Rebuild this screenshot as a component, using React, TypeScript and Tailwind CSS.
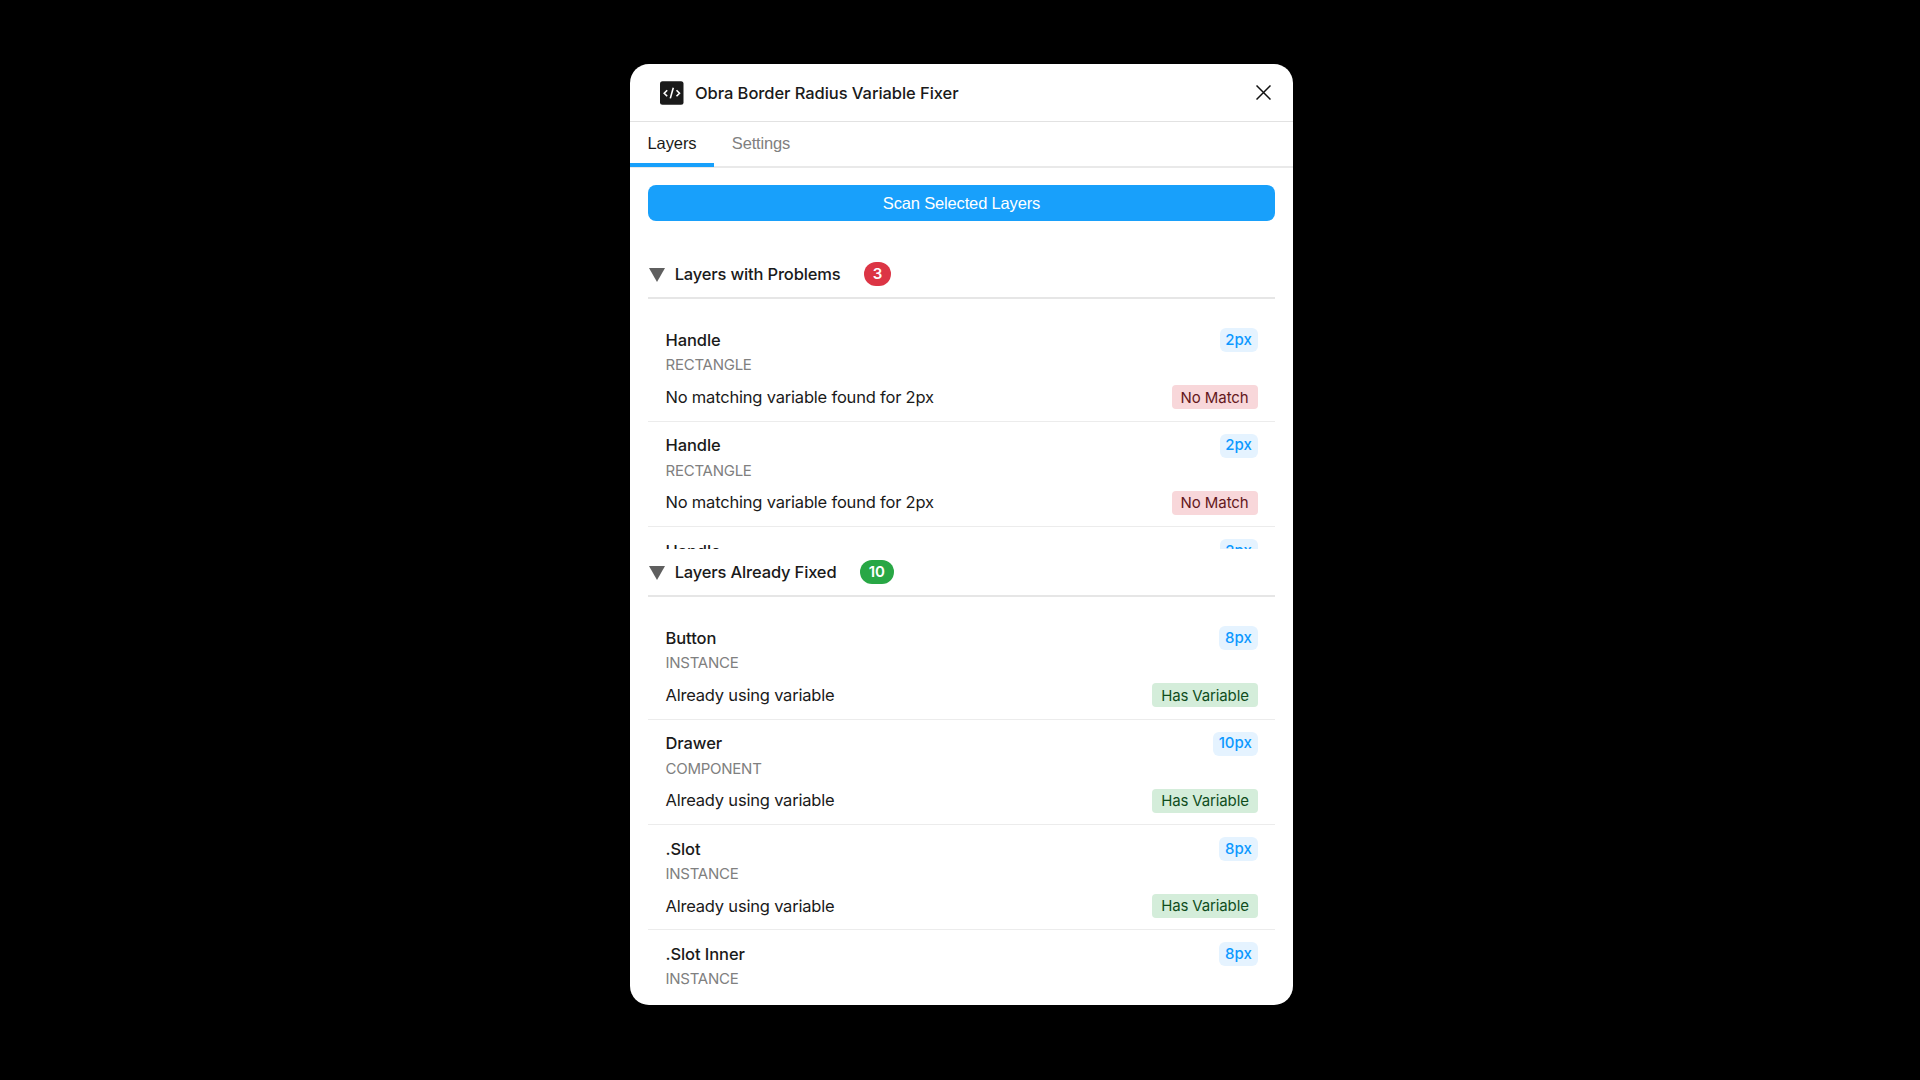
import React from "react";

type Layer = { name: string; type: string; radius: string };

const problems: Layer[] = [
  { name: "Handle", type: "RECTANGLE", radius: "2px" },
  { name: "Handle", type: "RECTANGLE", radius: "2px" },
  { name: "Handle", type: "RECTANGLE", radius: "2px" },
];

const fixed: Layer[] = [
  { name: "Button", type: "INSTANCE", radius: "8px" },
  { name: "Drawer", type: "COMPONENT", radius: "10px" },
  { name: ".Slot", type: "INSTANCE", radius: "8px" },
  { name: ".Slot Inner", type: "INSTANCE", radius: "8px" },
];

function LayerRow({ layer, ok }: { layer: Layer; ok: boolean }) {
  return (
    <div className="flex h-[105.33px] shrink-0 flex-col border-b border-[#ececec] pt-3 pr-[17.5px] pl-[17.5px]">
      <div className="flex h-6 items-center justify-between">
        <span className="font-medium tracking-[-0.08px]">{layer.name}</span>
        <span className="flex h-6 items-center rounded-md bg-[#e5f3ff] px-[5.8px] text-[15px] font-medium tracking-[-0.05px] text-[#0d99ff]">
          {layer.radius}
        </span>
      </div>
      <div className="h-[25px] text-[15px] leading-[25px] tracking-[-0.25px] text-[#808080]">{layer.type}</div>
      <div className="mt-2 flex h-6 items-center justify-between">
        <span className="tracking-[-0.2px]">
          {ok ? "Already using variable" : `No matching variable found for ${layer.radius}`}
        </span>
        {ok ? (
          <span className="flex h-6 items-center rounded bg-[#d4edda] px-[8.7px] pt-px text-[15px] tracking-[-0.13px] text-[#0f4d1d]">
            Has Variable
          </span>
        ) : (
          <span className="flex h-6 items-center rounded bg-[#f8d7da] px-[8.8px] pt-px text-[15px] tracking-[-0.05px] text-[#641820]">
            No Match
          </span>
        )}
      </div>
    </div>
  );
}

function SectionHeader({ title, count, ok }: { title: string; count: number; ok: boolean }) {
  return (
    <div className="flex h-12 shrink-0 items-start border-b-2 border-[#e6e6e6]">
      <svg className="mt-[16.5px] ml-[1.2px] h-[14px] w-4" viewBox="0 0 16 14" fill="#5f5f5f">
        <path d="M0 0H16L8 14Z" />
      </svg>
      <span className="mt-[11px] ml-[9.5px] h-6 leading-6 font-medium tracking-[-0.16px]">{title}</span>
      <span
        className={
          "mt-[11px] ml-[23.5px] flex h-6 items-center rounded-full px-[8.8px] text-[15px] font-semibold text-white " +
          (ok ? "bg-[#28a745]" : "bg-[#dc3545]")
        }
      >
        {count}
      </span>
    </div>
  );
}

export default function App() {
  return (
    <div className="flex h-[1080px] w-[1920px] flex-col items-start overflow-hidden bg-black pt-16 pl-[630px] font-['Inter',sans-serif] text-[16.5px] text-[#1a1a1a]">
      <main className="flex h-[941px] w-[663px] flex-col overflow-hidden rounded-[19px] bg-white">
        <header className="flex h-[58px] shrink-0 items-center border-b border-[#e2e2e2] pr-[22.5px] pl-[29.7px]">
          <svg className="h-6 w-6" viewBox="0 0 24 24" fill="none">
            <rect x="0" y="0.2" width="23.5" height="23.6" rx="2.5" fill="#1a1a1a" />
            <path d="M7.2 9.2L4.2 12.2L7.2 15.2M16.5 9.2L19.5 12.2L16.5 15.2M13.3 6.8L10.3 17.4" stroke="white" strokeWidth="1.6" />
          </svg>
          <h1 className="mt-0.5 ml-[11.3px] font-medium tracking-[-0.06px]">Obra Border Radius Variable Fixer</h1>
          <svg className="ml-auto h-[15px] w-[15px]" viewBox="0 0 15 15" stroke="#111" strokeWidth="1.5" fill="none">
            <path d="M0.5 0.5L14.5 14.5M14.5 0.5L0.5 14.5" />
          </svg>
        </header>
        <nav className="flex h-[46px] shrink-0 border-b-2 border-[#e9e9e9] font-['Liberation_Sans',Arial,sans-serif]">
          <button className="-mb-px h-[45px] w-[84px] border-b-4 border-[#18a0fb] pt-0.5 tracking-[-0.1px]">Layers</button>
          <button className="h-[41px] w-[94px] pt-0.5 tracking-[-0.15px] text-[#808080]">Settings</button>
        </nav>
        <button className="mx-[18px] mt-[17px] h-9 shrink-0 rounded-lg bg-[#18a0fb] font-['Liberation_Sans',Arial,sans-serif] tracking-[-0.16px] text-white">
          Scan Selected Layers
        </button>
        <div className="mx-[18px] mt-[30px] flex h-[298px] shrink-0 flex-col overflow-hidden">
          <SectionHeader title="Layers with Problems" count={3} ok={false} />
          <div className="mt-[17.3px] flex flex-col">
            {problems.map((l, i) => (
              <LayerRow key={i} layer={l} ok={false} />
            ))}
          </div>
        </div>
        <div className="mx-[18px] mb-3 flex min-h-0 flex-1 flex-col overflow-hidden">
          <SectionHeader title="Layers Already Fixed" count={10} ok />
          <div className="mt-[17.3px] flex min-h-0 flex-1 flex-col">
            {fixed.map((l, i) => (
              <LayerRow key={i} layer={l} ok />
            ))}
          </div>
        </div>
      </main>
    </div>
  );
}
